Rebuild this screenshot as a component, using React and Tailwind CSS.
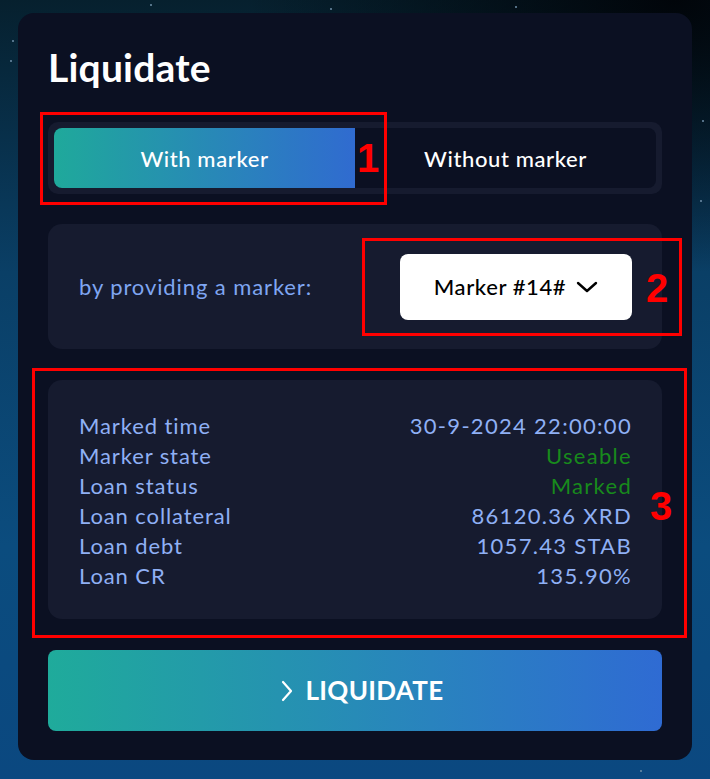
import React from "react";

const rows = [
  ["Marked time", "30-9-2024 22:00:00", false],
  ["Marker state", "Useable", true],
  ["Loan status", "Marked", true],
  ["Loan collateral", "86120.36 XRD", false],
  ["Loan debt", "1057.43 STAB", false],
  ["Loan CR", "135.90%", false],
];

const stars = [
  [515, 6], [330, 8], [12, 40], [150, 4], [700, 200], [702, 120], [10, 60], [640, 770],
];

export default function App() {
  return (
    <div
      className="relative w-full min-h-screen h-[779px] overflow-hidden pt-[13px] pl-[18px] bg-[radial-gradient(ellipse_60%_35%_at_95%_0%,#01050a_0%,rgba(1,5,10,0)_100%),linear-gradient(180deg,#06202e_0%,#0a3f66_35%,#0b4c7e_70%,#0b4880_100%)]"
      style={{ fontFamily: "Lato, 'Noto Sans', sans-serif" }}
    >
      {stars.map(([x, y], i) => (
        <div
          key={i}
          className="absolute w-[2px] h-[2px] rounded-full bg-[#6f8fa8]"
          style={{ left: x, top: y }}
        />
      ))}
      <div className="relative w-[674px] h-[747px] rounded-[16px] bg-[#0b1022] px-[30px] pt-[32px] flex flex-col">
        <h1 className="text-[39px] leading-[44px] font-bold text-white tracking-[0.2px]">Liquidate</h1>

        <div className="mt-[33px] rounded-[10px] bg-[#161b2f] p-[6px]">
          <div className="flex h-[60px] rounded-[8px] bg-[#0b1022]">
            <button className="flex-1 flex items-center justify-center rounded-l-[8px] bg-[linear-gradient(90deg,#1fa99b_0%,#306bd0_100%)] text-white text-[22px] tracking-[0.6px] font-medium">
              With marker
            </button>
            <button className="flex-1 flex items-center justify-center text-white text-[22px] tracking-[0.6px] font-medium">
              Without marker
            </button>
          </div>
        </div>

        <div className="mt-[30px] h-[125px] rounded-[14px] bg-[#161b2f] flex items-center justify-between pl-[31px] pr-[30px]">
          <span className="text-[22px] tracking-[0.9px] text-[#7fa6f2]">by providing a marker:</span>
          <div className="w-[232px] h-[66px] rounded-[8px] bg-white flex items-center justify-center gap-[10px] text-[22px] tracking-[0.6px] font-medium text-black">
            <span>Marker #14#</span>
            <svg width="22" height="14" viewBox="0 0 22 14" fill="none">
              <path d="M2 3l9 8 9-8" stroke="#000" strokeWidth="2.4" strokeLinecap="round" strokeLinejoin="round" />
            </svg>
          </div>
        </div>

        <div className="mt-[31px] h-[239px] rounded-[14px] bg-[#161b2f] pl-[31px] pr-[30px] pt-[31px]">
          {rows.map(([k, v, g]) => (
            <div key={k} className="flex justify-between text-[22px] leading-[30px]">
              <span className="text-[#8fb0f5] tracking-[0.9px]">{k}</span>
              <span className={(g ? "text-[#188a1c]" : "text-[#8fb0f5]") + " tracking-[1.3px]"}>{v}</span>
            </div>
          ))}
        </div>

        <button className="mt-[31px] h-[81px] pl-[14px] rounded-[8px] bg-[linear-gradient(90deg,#1fab9b_0%,#2f6bd3_100%)] flex items-center justify-center gap-[13px] text-white text-[26px] tracking-[0.3px] font-bold">
          <svg width="12" height="22" viewBox="0 0 12 22" fill="none">
            <path d="M2 2l8 9-8 9" stroke="#fff" strokeWidth="2.2" strokeLinecap="round" strokeLinejoin="round" />
          </svg>
          <span>LIQUIDATE</span>
        </button>
      </div>

      {/* annotations */}
      <div className="absolute left-[40px] top-[112px] w-[347px] h-[93px] border-[3px] border-[#ff0000]" />
      <span className="absolute left-[357px] top-[134px] text-[#ff0000] text-[40px] font-black leading-[48px]" style={{ fontFamily: "'Liberation Sans', sans-serif" }}>1</span>
      <div className="absolute left-[362px] top-[238px] w-[320px] h-[98px] border-[3px] border-[#ff0000]" />
      <span className="absolute left-[646px] top-[264px] text-[#ff0000] text-[40px] font-black leading-[48px]" style={{ fontFamily: "'Liberation Sans', sans-serif" }}>2</span>
      <div className="absolute left-[32px] top-[368px] w-[655px] h-[270px] border-[3px] border-[#ff0000]" />
      <span className="absolute left-[650px] top-[482px] text-[#ff0000] text-[40px] font-black leading-[48px]" style={{ fontFamily: "'Liberation Sans', sans-serif" }}>3</span>
    </div>
  );
}
